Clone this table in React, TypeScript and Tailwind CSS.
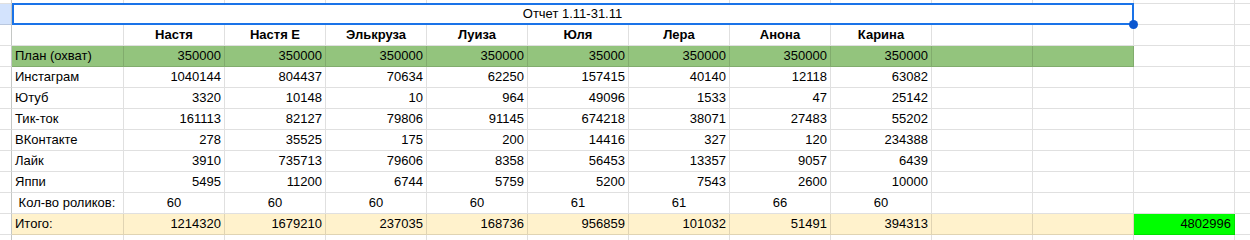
import React from "react";

const names = ["Настя", "Настя Е", "Элькруза", "Луиза", "Юля", "Лера", "Анона", "Карина"];
const plan = [350000, 350000, 350000, 350000, 35000, 350000, 350000, 350000];
const data: [string, number[]][] = [
  ["Инстаграм", [1040144, 804437, 70634, 62250, 157415, 40140, 12118, 63082]],
  ["Ютуб", [3320, 10148, 10, 964, 49096, 1533, 47, 25142]],
  ["Тик-ток", [161113, 82127, 79806, 91145, 674218, 38071, 27483, 55202]],
  ["ВКонтакте", [278, 35525, 175, 200, 14416, 327, 120, 234388]],
  ["Лайк", [3910, 735713, 79606, 8358, 56453, 13357, 9057, 6439]],
  ["Яппи", [5495, 11200, 6744, 5759, 5200, 7543, 2600, 10000]],
];
const counts = [60, 60, 60, 60, 61, 61, 66, 60];
const totals = [1214320, 1679210, 237035, 168736, 956859, 101032, 51491, 394313];

const base =
  "shrink-0 h-full border-r border-b border-black/[0.12] px-[3px] leading-[20px] whitespace-nowrap overflow-hidden";

function Hdr({ selected = false }: { selected?: boolean }) {
  return (
    <div
      className={`shrink-0 w-[12px] h-full border-r border-b border-r-[#c4c7c5] border-b-black/[0.12] ${
        selected ? "bg-[#d3e3fd]" : "bg-white"
      }`}
    />
  );
}

function Cell({
  w = "w-[101px]",
  bg = "bg-white",
  align = "text-left",
  bold = false,
  children,
}: {
  w?: string;
  bg?: string;
  align?: string;
  bold?: boolean;
  children?: React.ReactNode;
}) {
  return (
    <div className={`${base} ${w} ${bg} ${align} ${bold ? "font-bold" : ""}`}>{children}</div>
  );
}

function Rest() {
  return <div className="flex-1 h-full border-b border-black/[0.12] bg-white" />;
}

export default function App() {
  return (
    <div className="relative w-[1250px] h-[240px] overflow-hidden bg-white text-black text-[13px] font-['Liberation_Sans',Arial,sans-serif]">
      {/* partial row above */}
      <div className="flex h-[4px]">
        <Hdr />
        <Cell w="w-[112px]" />
        <Cell />
        <Cell />
        <Cell />
        <Cell w="w-[303px]" />
        <Cell />
        <Cell />
        <Cell />
        <Cell />
        <Cell />
        <Rest />
      </div>
      {/* title row */}
      <div className="flex h-[21px]">
        <Hdr selected />
        <Cell w="w-[1122px]" align="text-center">
          Отчет 1.11-31.11
        </Cell>
        <Cell />
        <Rest />
      </div>
      {/* names */}
      <div className="flex h-[21px]">
        <Hdr />
        <Cell w="w-[112px]" />
        {names.map((n) => (
          <Cell key={n} align="text-center" bold>
            {n}
          </Cell>
        ))}
        <Cell />
        <Cell />
        <Cell />
        <Rest />
      </div>
      {/* plan */}
      <div className="flex h-[21px]">
        <Hdr />
        <Cell w="w-[112px]" bg="bg-[#93c47d]">
          План (охват)
        </Cell>
        {plan.map((v, i) => (
          <Cell key={i} bg="bg-[#93c47d]" align="text-right">
            {v}
          </Cell>
        ))}
        <Cell bg="bg-[#93c47d]" />
        <Cell bg="bg-[#93c47d]" />
        <Cell />
        <Rest />
      </div>
      {data.map(([label, vals]) => (
        <div key={label} className="flex h-[21px]">
          <Hdr />
          <Cell w="w-[112px]">{label}</Cell>
          {vals.map((v, i) => (
            <Cell key={i} align="text-right">
              {v}
            </Cell>
          ))}
          <Cell />
          <Cell />
          <Cell />
          <Rest />
        </div>
      ))}
      {/* counts */}
      <div className="flex h-[21px]">
        <Hdr />
        <Cell w="w-[112px]">
          <span className="whitespace-pre"> Кол-во роликов:</span>
        </Cell>
        {counts.map((v, i) => (
          <Cell key={i} align="text-center">
            {v}
          </Cell>
        ))}
        <Cell />
        <Cell />
        <Cell />
        <Rest />
      </div>
      {/* totals */}
      <div className="flex h-[21px]">
        <Hdr />
        <Cell w="w-[112px]" bg="bg-[#fff2cc]">
          Итого:
        </Cell>
        {totals.map((v, i) => (
          <Cell key={i} bg="bg-[#fff2cc]" align="text-right">
            {v}
          </Cell>
        ))}
        <Cell bg="bg-[#fff2cc]" />
        <Cell bg="bg-[#fff2cc]" />
        <Cell bg="bg-[#00ff00]" align="text-right">
          4802996
        </Cell>
        <Rest />
      </div>
      {/* partial row below */}
      <div className="flex h-[6px]">
        <Hdr />
        <Cell w="w-[112px]" />
        {Array.from({ length: 11 }).map((_, i) => (
          <Cell key={i} />
        ))}
        <Rest />
      </div>

      {/* selection overlay */}
      <div className="absolute left-[12px] top-[3px] w-[1122px] h-[22px] border-2 border-[#1a73e8] pointer-events-none" />
      <div className="absolute left-[1129px] top-[20px] w-[9px] h-[9px] rounded-full bg-[#0b57d0]" />
    </div>
  );
}
